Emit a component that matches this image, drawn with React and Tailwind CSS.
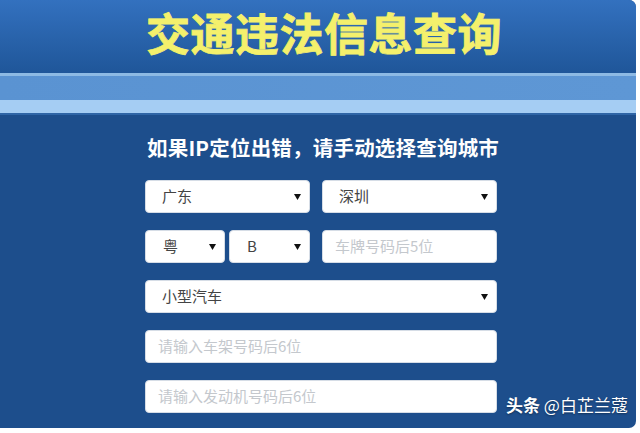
import React from "react";

const cjk = { fontFamily: '"Noto Sans CJK SC", "Noto Sans", sans-serif' };

function Caret() {
  return (
    <svg width="7" height="6" viewBox="0 0 7 6" className="shrink-0">
      <path d="M0 0 L7 0 L3.5 6 Z" fill="#111" />
    </svg>
  );
}

function Select({ value, className = "", pl = "pl-[16px]" }) {
  return (
    <div
      className={`h-[33px] bg-white rounded-[4px] border border-[#d6dde6] flex items-center justify-between ${pl} pr-[8px] text-[15px] text-[#444] ${className}`}
    >
      <span>{value}</span>
      <Caret />
    </div>
  );
}

function Field({ placeholder, className = "", pl = "pl-[12px]" }) {
  return (
    <div
      className={`h-[33px] bg-white rounded-[4px] border border-[#d6dde6] flex items-center ${pl} text-[15px] text-[#c4c8cd] ${className}`}
    >
      {placeholder}
    </div>
  );
}

export default function App() {
  return (
    <div className="w-[640px] h-[433px] bg-white overflow-hidden" style={cjk}>
      <div className="w-[636px] h-[428px] rounded-r-[7px] overflow-hidden bg-[#1d4e8c] flex flex-col">
        {/* title bar */}
        <div className="h-[73px] bg-gradient-to-b from-[#3371bf] to-[#1f5699] flex items-start justify-center pl-[12px]">
          <h1 className="text-[44px] leading-[64px] font-bold text-[#f4f06c] tracking-[0.5px] whitespace-nowrap [-webkit-text-stroke:0.8px_#f4f06c]">
            交通违法信息查询
          </h1>
        </div>
        {/* stripes */}
        <div className="h-[3px] bg-[#8dbae4]" />
        <div className="h-[24px] bg-gradient-to-r from-[#5a93d2] to-[#5e97d5]" />
        <div className="h-[13px] bg-[#a5cdf3]" />
        <div className="h-[2px] bg-[#2f65a6]" />

        {/* form */}
        <div className="flex-1 pl-[145px] pt-[19px]">
          <div className="w-[352px] flex flex-col">
            <p className="text-[20.5px] leading-[26px] font-bold text-white whitespace-nowrap pl-[2px] tracking-[0.2px]">
              如果IP定位出错，请手动选择查询城市
            </p>
            <div className="mt-[20px] flex flex-col gap-[17px]">
              <div className="flex gap-[12px]">
                <Select value="广东" className="w-[165px]" />
                <Select value="深圳" className="w-[175px]" />
              </div>
              <div className="flex gap-[12px]">
                <div className="flex gap-[4px]">
                  <Select value="粤" className="w-[80px]" pl="pl-[17px]" />
                  <Select value="B" className="w-[81px]" pl="pl-[17px]" />
                </div>
                <Field placeholder="车牌号码后5位" className="w-[175px]" />
              </div>
              <Select value="小型汽车" className="w-[352px]" />
              <Field placeholder="请输入车架号码后6位" />
              <Field placeholder="请输入发动机号码后6位" />
            </div>
          </div>
        </div>
      </div>
      {/* watermark */}
      <div className="relative">
        <span
          className="absolute left-[506px] top-[-36px] text-[17px] font-bold text-white whitespace-nowrap"
          style={{ textShadow: "0 1px 2px rgba(0,0,0,0.4)" }}
        >
          头条 <span className="font-normal">@白芷兰蔻</span>
        </span>
      </div>
    </div>
  );
}
